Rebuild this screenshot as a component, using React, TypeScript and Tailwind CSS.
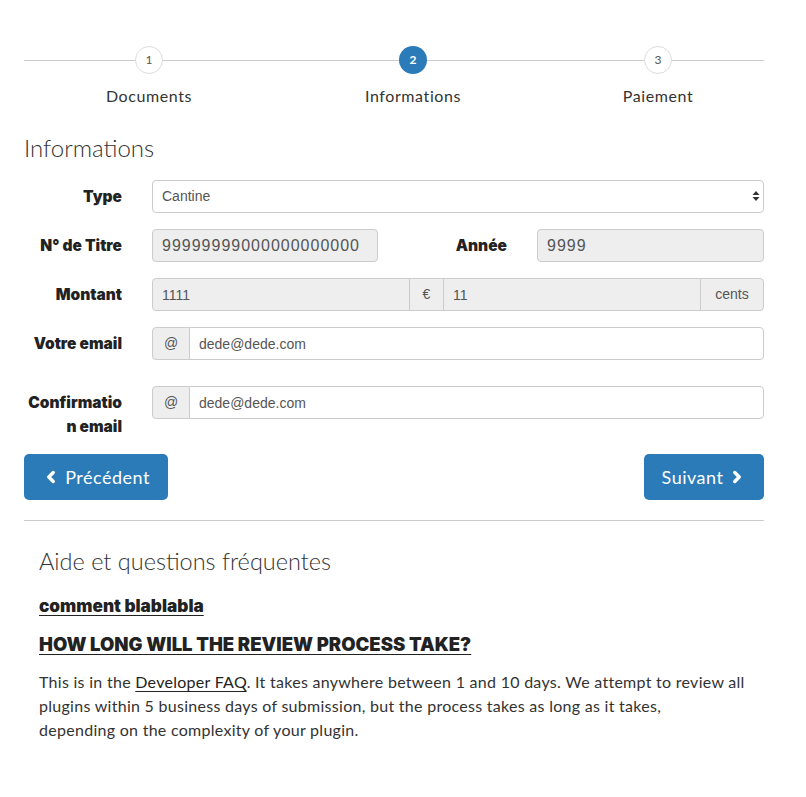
import { ChevronLeft, ChevronRight } from 'lucide-react';

const steps = [
  { n: 1, label: 'Documents', w: 'w-[250px]', active: false },
  { n: 2, label: 'Informations', w: 'w-[278px]', active: true },
  { n: 3, label: 'Paiement', w: 'w-[212px]', active: false },
];

const inputCls =
  "h-[33px] min-w-0 border border-[#ccc] px-[9px] text-[14px] text-[#555] outline-none font-['Liberation_Sans',sans-serif]";

const boldCls = "font-['Inter',sans-serif] font-black text-[#222]";

function Label({ children }: { children: React.ReactNode }) {
  return (
    <label className={`w-[98px] shrink-0 pt-[5px] text-right text-[15.5px] leading-[24px] ${boldCls}`}>
      {children}
    </label>
  );
}

function Addon({ children, className = '' }: { children: React.ReactNode; className?: string }) {
  return (
    <span
      className={`flex h-[33px] shrink-0 items-center justify-center border border-[#ccc] bg-[#eee] text-[14px] text-[#555] font-['Liberation_Sans',sans-serif] ${className}`}
    >
      {children}
    </span>
  );
}

export default function App() {
  return (
    <div className="min-h-[797px] bg-white font-['Lato',sans-serif] text-[#333]">
      <div className="ml-[24px] w-[740px] pt-[46px]">
        {/* Stepper */}
        <div className="relative">
          <div className="absolute left-0 right-0 top-[14px] h-px bg-[#ccc]" />
          <div className="relative flex">
            {steps.map((s) => (
              <div key={s.n} className={`${s.w} flex flex-col items-center`}>
                <div
                  className={
                    s.active
                      ? 'flex h-[28px] w-[28px] items-center justify-center rounded-full bg-[#2b7bb9] text-[12px] font-bold text-white'
                      : 'flex h-[28px] w-[28px] items-center justify-center rounded-full border border-[#ddd] bg-white text-[12px] text-[#555]'
                  }
                >
                  {s.n}
                </div>
                <div className="mt-[10px] text-[16px] leading-[24px] tracking-[0.6px] text-[#333]">{s.label}</div>
              </div>
            ))}
          </div>
        </div>

        {/* Form */}
        <h3 className="mt-[27px] text-[24px] leading-[26px] font-light text-[#333]">Informations</h3>

        <div className="mt-[19px] flex flex-col">
          <div className="flex gap-[30px]">
            <Label>Type</Label>
            <div className="relative flex flex-1">
              <select className={`${inputCls} w-full appearance-none rounded-[4px] bg-white`} defaultValue="Cantine">
                <option>Cantine</option>
              </select>
              <svg className="absolute right-[4px] top-[10px]" width="8" height="12" viewBox="0 0 8 12">
                <path d="M4 1 L7.5 5 H0.5 Z" fill="#333" />
                <path d="M4 11 L7.5 7 H0.5 Z" fill="#333" />
              </svg>
            </div>
          </div>

          <div className="mt-[16px] flex gap-[30px]">
            <Label>N° de Titre</Label>
            <div className="flex w-[226px] shrink-0">
              <input
                readOnly
                value="99999999000000000000"
                className={`${inputCls} w-full rounded-[4px] bg-[#eee] text-[16px] tracking-[1px]`}
              />
            </div>
            <div className={`w-[99px] shrink-0 pt-[5px] text-right text-[15.5px] leading-[24px] ${boldCls}`}>Année</div>
            <div className="flex flex-1">
              <input
                readOnly
                value="9999"
                className={`${inputCls} w-full rounded-[4px] bg-[#eee] text-[16px] tracking-[1px]`}
              />
            </div>
          </div>

          <div className="mt-[16px] flex gap-[30px]">
            <Label>Montant</Label>
            <div className="flex min-w-0 flex-1">
              <input
                readOnly
                value="1111"
                className={`${inputCls} w-[258px] shrink-0 rounded-l-[4px] bg-[#eee] font-['Lato',sans-serif]`}
              />
              <Addon className="w-[35px] -ml-px">€</Addon>
              <input
                readOnly
                value="11"
                className={`${inputCls} -ml-px w-0 flex-1 bg-[#eee] font-['Lato',sans-serif]`}
              />
              <Addon className="w-[64px] -ml-px rounded-r-[4px]">cents</Addon>
            </div>
          </div>

          <div className="mt-[16px] flex gap-[30px]">
            <Label>Votre email</Label>
            <div className="flex min-w-0 flex-1">
              <Addon className="w-[38px] rounded-l-[4px]">@</Addon>
              <input readOnly value="dede@dede.com" className={`${inputCls} -ml-px w-0 flex-1 rounded-r-[4px] bg-white`} />
            </div>
          </div>

          <div className="mt-[26px] flex gap-[30px]">
            <Label>
              Confirmatio
              <br />n email
            </Label>
            <div className="flex h-[33px] min-w-0 flex-1">
              <Addon className="w-[38px] rounded-l-[4px]">@</Addon>
              <input readOnly value="dede@dede.com" className={`${inputCls} -ml-px w-0 flex-1 rounded-r-[4px] bg-white`} />
            </div>
          </div>
        </div>

        {/* Buttons */}
        <div className="mt-[15px] flex justify-between">
          <button className="flex h-[46px] w-[144px] items-center justify-center gap-[5px] rounded-[5px] bg-[#2b7bb9] text-[18px] tracking-[0.5px] text-white">
            <ChevronLeft size={18} strokeWidth={4.5} />
            Précédent
          </button>
          <button className="flex h-[46px] w-[120px] items-center justify-center gap-[5px] rounded-[5px] bg-[#2b7bb9] text-[18px] tracking-[0.5px] text-white">
            Suivant
            <ChevronRight size={18} strokeWidth={4.5} />
          </button>
        </div>

        <hr className="mt-[20px] border-t border-[#ccc]" />

        {/* Help */}
        <div className="px-[15px] pt-[25px]">
          <h3 className="text-[23.5px] leading-[30px] font-light text-[#333]">Aide et questions fréquentes</h3>
          <a className={`mt-[19px] inline-block text-[17.2px] leading-[22px] underline underline-offset-[3px] ${boldCls}`}>
            comment blablabla
          </a>
          <div>
            <a className={`mt-[14px] inline-block text-[18.5px] leading-[24px] underline underline-offset-[3px] ${boldCls}`}>
              HOW LONG WILL THE REVIEW PROCESS TAKE?
            </a>
          </div>
          <p className="mt-[13px] text-[16px] leading-[24px] tracking-[0.28px] text-[#333]">
            This is in the <a className="underline underline-offset-[3px] text-[#222]">Developer FAQ</a>. It takes anywhere
            between 1 and 10 days. We attempt to review all plugins within 5 business days of submission, but the process
            takes as long as it takes,
            <br />
            depending on the complexity of your plugin.
          </p>
        </div>
      </div>
    </div>
  );
}
